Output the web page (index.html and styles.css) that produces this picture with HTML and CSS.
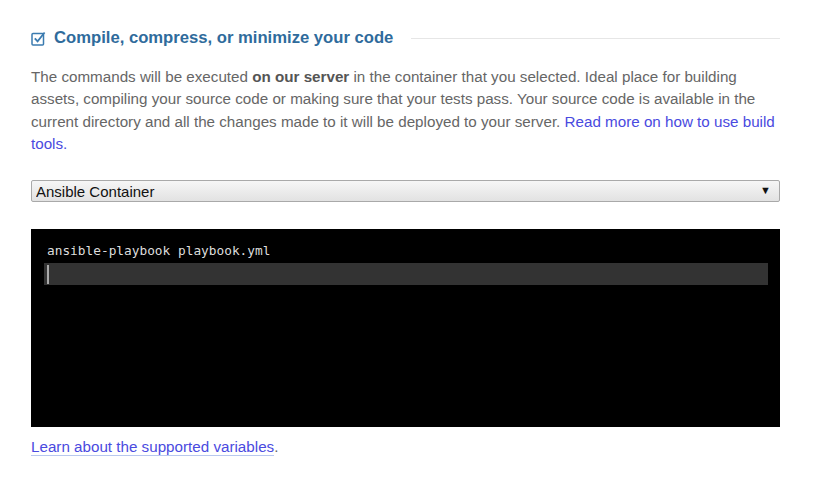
FILE: index.html
```html
<!DOCTYPE html>
<html lang="en">
  <head>
    <meta charset="UTF-8" />
    <title>Build commands</title>
    <link rel="stylesheet" href="styles.css">
  </head>
  <body>
    <div class="section">
      <h2 class="section-title">
        <svg class="title-icon" width="15" height="15" viewBox="0 0 15 15">
          <rect x="1" y="2.5" width="11.5" height="11.5" rx="1" fill="none" stroke="#3b7bb0" stroke-width="1.5"/>
          <path d="M3.8 7.3 L6.6 10.4 L13.6 1.5" fill="none" stroke="#3b7bb0" stroke-width="1.8"/>
        </svg>
        <span>Compile, compress, or minimize your code</span>
        <span class="title-rule"></span>
      </h2>
      <p class="intro">
        The commands will be executed <strong>on our server</strong> in the container that you selected. Ideal place for building
        assets, compiling your source code or making sure that your tests pass. Your source code is available in the
        current directory and all the changes made to it will be deployed to your server.
        <a href="#">Read more on how to use build tools.</a>
      </p>
      <div class="select-wrap">
        <select class="container-select">
          <option>Ansible Container</option>
        </select>
        <span class="select-arrow">&#9660;</span>
      </div>
      <div class="terminal">
        <div class="term-line">ansible-playbook playbook.yml</div>
        <div class="term-input"><span class="cursor"></span></div>
      </div>
      <p class="vars"><a href="#">Learn about the supported variables</a>.</p>
    </div>
  </body>
</html>
```
FILE: styles.css
```css
body {
  margin: 0;
  background: #fff;
  font-family: "Liberation Sans", Arial, sans-serif;
}
.section {
  width: 749px;
  margin-left: 31px;
  padding-top: 27px;
}
.section-title {
  display: flex;
  align-items: center;
  margin: 0;
  font-size: 16.65px;
  line-height: 22px;
  color: #2f6b9c;
}
.title-icon {
  margin-right: 8px;
  flex-shrink: 0;
}
.title-rule {
  flex: 1;
  height: 1px;
  margin-left: 18px;
  background: #e6e6e6;
}
.intro {
  margin: 17px -8px 0 0;
  font-size: 15.2px;
  line-height: 22.3px;
  color: #666;
}
.intro strong {
  color: #555;
}
.intro a,
.vars a {
  color: #4a4ae0;
  text-decoration: none;
}
.select-wrap {
  position: relative;
  margin-top: 25px;
}
.container-select {
  appearance: none;
  -webkit-appearance: none;
  display: block;
  width: 100%;
  height: 22px;
  padding: 0 4px;
  border: 1px solid #a9a9a9;
  border-radius: 2px;
  background: linear-gradient(to bottom, #f6f6f6, #e2e2e2);
  font-family: "Liberation Sans", Arial, sans-serif;
  font-size: 15px;
  color: #111;
}
.select-arrow {
  position: absolute;
  right: 9px;
  top: 4px;
  font-size: 11px;
  color: #111;
  pointer-events: none;
}
.terminal {
  margin-top: 27px;
  height: 198px;
  padding: 13px 12px 0 13px;
  box-sizing: border-box;
  background: #000;
}
.term-line {
  padding-left: 3px;
  font-family: "DejaVu Sans Mono", monospace;
  font-size: 12.8px;
  line-height: 17px;
  color: #ddd;
}
.term-input {
  height: 22px;
  margin-top: 4px;
  padding-left: 2px;
  background: #333;
  display: flex;
  align-items: center;
}
.cursor {
  width: 2px;
  height: 19px;
  margin-left: 1px;
  background: #aaa;
}
.vars {
  margin: 10px 0 0;
  font-size: 15.2px;
  line-height: 20px;
  color: #666;
}
.vars a {
  border-bottom: 1px solid #b8c8ee;
}
```
